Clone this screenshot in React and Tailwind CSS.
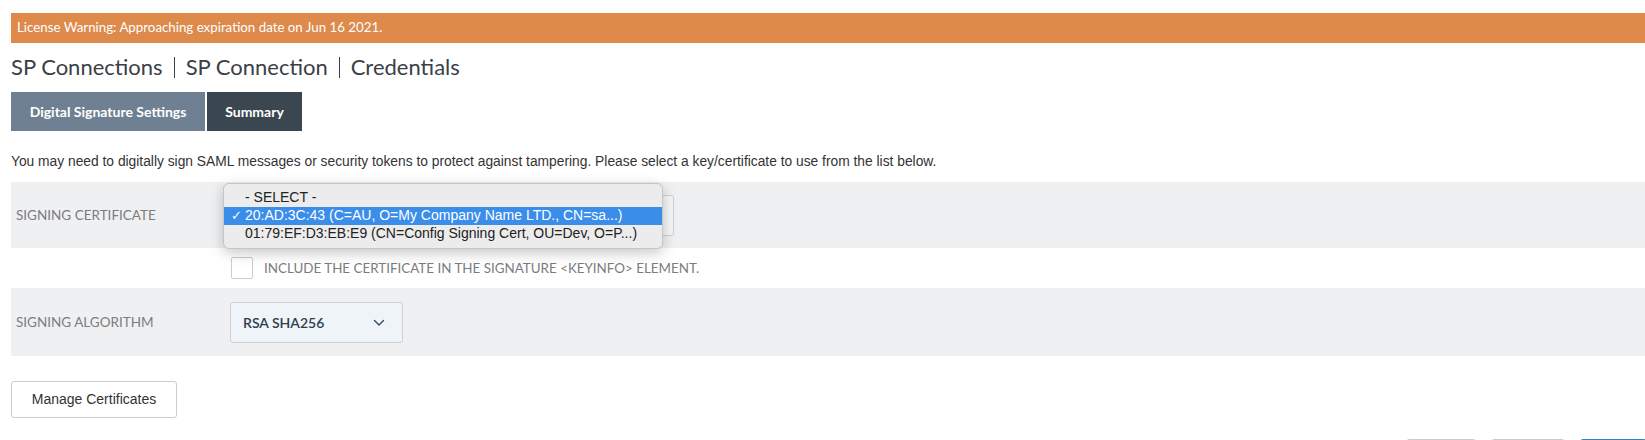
import React from "react";

const P = "font-['Lato','Noto_Sans',sans-serif]";
const H = "font-['Liberation_Sans','Arial',sans-serif]";

function Chevron() {
  return (
    <svg width="12" height="8" viewBox="0 0 12 8" fill="none">
      <path d="M1.5 1.5 L6 6 L10.5 1.5" stroke="#34495e" strokeWidth="1.4" strokeLinecap="round" strokeLinejoin="round" />
    </svg>
  );
}

export default function App() {
  return (
    <div className={`relative h-[440px] w-full overflow-hidden bg-white pl-[11px] pt-[13px] ${P}`}>
      <div className="flex h-[30px] items-center bg-[#dd8a4b] pl-[6px] text-[13.3px] text-white">
        License Warning: Approaching expiration date on Jun 16 2021.
      </div>

      <div className="mt-[13px] flex h-[22px] items-center text-[22px] leading-none text-[#3a4046]">
        <span className="pr-[11px]">SP Connections</span>
        <span className="h-[21px] w-px bg-[#3a4046]"></span>
        <span className="px-[11px]">SP Connection</span>
        <span className="h-[21px] w-px bg-[#3a4046]"></span>
        <span className="pl-[11px]">Credentials</span>
      </div>

      <div className="mt-[14px] flex h-[39px]">
        <div className="flex w-[194px] items-center justify-center bg-[#6e8092] text-[14px] font-bold text-white">
          Digital Signature Settings
        </div>
        <div className="ml-[2px] flex w-[95px] items-center justify-center bg-[#3a4750] text-[14px] font-bold text-white">
          Summary
        </div>
      </div>

      <p className={`mt-[23px] h-[16px] text-[13.8px] leading-[16px] text-[#333] ${H}`}>
        You may need to digitally sign SAML messages or security tokens to protect against tampering. Please select a key/certificate to use from the list below.
      </p>

      <div className="mt-[12px] flex h-[66px] items-center bg-[#eff0f2]">
        <div className="w-[220px] pl-[5px] text-[13.5px] uppercase text-[#7a7d80]">Signing Certificate</div>
        <div className="relative h-[41px] w-[443px] rounded-[3px] border border-[#cdd1d4] bg-[#f4f6f7]">
          <div className={`absolute left-[-9px] top-[-13px] w-[440px] rounded-[6px] border border-[#c5c5c5] bg-[#ececec] pb-[5px] pt-[5px] text-[14px] text-[#222] shadow-[0_4px_14px_rgba(0,0,0,0.22)] ${H}`}>
            <div className="flex h-[18px] items-center pl-[21px]">- SELECT -</div>
            <div className="relative flex h-[18px] items-center bg-[#3b8dea] pl-[21px] text-white">
              <span className="absolute left-[7px] text-[13px]">✓</span>
              20:AD:3C:43 (C=AU, O=My Company Name LTD., CN=sa...)
            </div>
            <div className="flex h-[18px] items-center pl-[21px]">01:79:EF:D3:EB:E9 (CN=Config Signing Cert, OU=Dev, O=P...)</div>
          </div>
        </div>
      </div>

      <div className="flex h-[41px] items-center border-b border-[#eceef0] pl-[220px]">
        <div className="h-[22px] w-[22px] rounded-[2px] border border-[#c9cdd0] bg-white"></div>
        <span className="ml-[11px] text-[13.4px] uppercase text-[#7a7d80]">Include the certificate in the signature &lt;KEYINFO&gt; element.</span>
      </div>

      <div className="flex h-[67px] items-center bg-[#eff0f2]">
        <div className="w-[219px] pl-[5px] text-[13.5px] uppercase text-[#7a7d80]">Signing Algorithm</div>
        <div className="flex h-[41px] w-[173px] items-center justify-between rounded-[3px] border border-[#cdd1d4] bg-[#eef4f7] pl-[12px] pr-[17px]">
          <span className="text-[14px] font-semibold text-[#2e3e50]">RSA SHA256</span>
          <Chevron />
        </div>
      </div>

      <div className="mt-[25px]">
        <button className={`h-[37px] w-[166px] rounded-[3px] border border-[#c9cdd0] bg-white text-[14px] text-[#333] ${H}`}>
          Manage Certificates
        </button>
      </div>

      <div className="mt-[21px] flex justify-end">
        <div className="h-[38px] w-[70px] rounded-[3px] border border-[#c9cdd0] bg-white"></div>
        <div className="ml-[15px] h-[38px] w-[74px] rounded-[3px] border border-[#c9cdd0] bg-white"></div>
        <div className="ml-[15px] h-[38px] w-[65px] rounded-tl-[3px] border border-[#2d86c4] bg-[#3a97d6]"></div>
      </div>
    </div>
  );
}
